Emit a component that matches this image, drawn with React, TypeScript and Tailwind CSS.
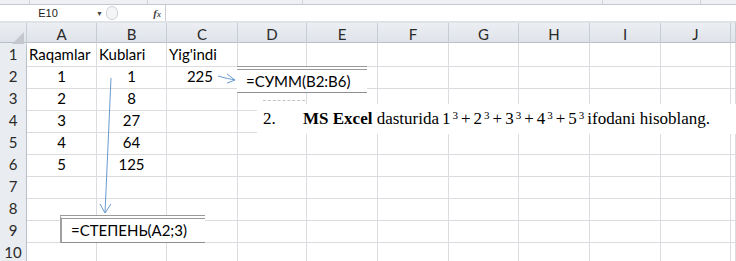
import React from 'react';

const COLS = ['A', 'B', 'C', 'D', 'E', 'F', 'G', 'H', 'I', 'J', ''];
const GRID = 'grid grid-cols-[27px_70px_70px_71px_69px_71px_71px_70px_71px_71px_70px_1fr]';

type Cell = { text?: string; align?: 'left' | 'center' | 'right' };

const rows: Cell[][] = [
  [{ text: 'Raqamlar' }, { text: 'Kublari' }, { text: "Yig'indi" }],
  [{ text: '1', align: 'center' }, { text: '1', align: 'center' }, { text: '225', align: 'right' }],
  [{ text: '2', align: 'center' }, { text: '8', align: 'center' }],
  [{ text: '3', align: 'center' }, { text: '27', align: 'center' }],
  [{ text: '4', align: 'center' }, { text: '64', align: 'center' }],
  [{ text: '5', align: 'center' }, { text: '125', align: 'center' }],
  [],
  [],
  [],
  [],
];

const alignClass = (a?: string) =>
  a === 'center' ? 'justify-center' : a === 'right' ? 'justify-end pr-[24px]' : 'justify-start pl-[2px]';

const Cube: React.FC<{ n: string }> = ({ n }) => (
  <span>
    {n}
    <sup className="text-[11px] ml-[2px]">3</sup>
  </span>
);

export default function App() {
  return (
    <div className="w-[736px] h-[261px] overflow-hidden bg-white font-['Lato',sans-serif] text-[15px] text-black">
      {/* ribbon edge */}
      <div className="h-[5px] bg-[#eef0f3] border-b border-[#c3c8cf] flex">
        <div className="w-[30px] border-r border-[#d0d4da]" />
        <div className="w-[118px] border-r border-[#d0d4da]" />
        <div className="w-[155px] border-r border-[#d0d4da]" />
        <div className="w-[300px] border-r border-[#d0d4da]" />
        <div className="w-[98px] border-r border-[#d0d4da]" />
      </div>

      {/* formula bar */}
      <div className="h-[16px] flex items-center bg-white">
        <div className="w-[96px] text-center text-[11px] font-['Liberation_Sans',sans-serif] text-[#222]">E10</div>
        <div className="w-[10px] text-[7px] text-[#444] leading-none">▼</div>
        <div className="w-[12px] h-[14px] rounded-full border border-[#cfd3d8] bg-[#f4f5f7]" />
        <div className="w-[47px] text-right pr-[4px] text-[11px] italic font-['Liberation_Serif',serif] font-bold text-[#444]">
          f<span className="text-[8px]">x</span>
        </div>
        <div className="flex-1 h-full border-l border-[#c9ced5]" />
      </div>
      <div className="h-[2px] bg-[#dfe3e8]" />

      <div className="relative">
        {/* column headers */}
        <div className={`${GRID} h-[20px] bg-gradient-to-b from-[#eceef2] to-[#dfe3e9] border-b border-[#b9c0c9]`}>
          <div className="relative border-r border-[#c6ccd4]">
            <div className="absolute right-[2px] bottom-[2px] w-0 h-0 border-l-[12px] border-l-transparent border-b-[12px] border-b-[#c4c8ce]" />
          </div>
          {COLS.map((c, i) => (
            <div key={i} className="flex items-center justify-center border-r border-[#c6ccd4] text-[#2a2a2a]">
              {c}
            </div>
          ))}
        </div>

        {/* rows */}
        {rows.map((r, ri) => (
          <div key={ri} className={`${GRID} h-[22px]`}>
            <div className="flex items-center justify-center bg-[#e9ecf0] border-r border-[#b9c0c9] border-b border-b-[#d3d8de] text-[#2a2a2a]">
              {ri + 1}
            </div>
            {COLS.map((_, ci) => {
              const cell = r[ci];
              return (
                <div
                  key={ci}
                  className={`flex items-center border-r border-b border-[#dadcdf] ${alignClass(cell?.align)}`}
                >
                  {cell?.text}
                </div>
              );
            })}
          </div>
        ))}

        {/* =СУММ callout */}
        <div className="absolute left-[237px] top-[43px] w-[130px] h-[27px] bg-white border-t-[4px] border-double border-t-[#9a9a9a] border-b border-b-[#8f8f8f] flex items-center pl-[9px] text-[15px]">
          =СУММ(B2:B6)
        </div>
        <div className="absolute left-[263px] top-[77px] w-[42px] border-t border-dashed border-[#c4c4c4]" />

        {/* task text */}
        <div className="absolute left-[257px] top-[81px] w-[479px] h-[30px] bg-white flex items-center font-['Liberation_Serif',serif] text-[17px] whitespace-nowrap">
          <span className="pl-[6px] w-[46px]">2.</span>
          <span className="font-bold">MS Excel</span>
          <span className="flex items-center gap-[3px]">
            <span>&nbsp;dasturida</span>
            <Cube n="1" />+<Cube n="2" />+<Cube n="3" />+<Cube n="4" />+<Cube n="5" />
            <span>ifodani hisoblang.</span>
          </span>
        </div>

        {/* =СТЕПЕНЬ callout */}
        <div className="absolute left-[60px] top-[192px] w-[145px] h-[28px] bg-white border-t-[4px] border-double border-t-[#9a9a9a] border-l-2 border-l-[#a0a0a0] border-b border-b-[#8f8f8f] flex items-center pl-[9px] text-[15px]">
          =СТЕПЕНЬ(A2;3)
        </div>

        {/* arrows */}
        <svg className="absolute left-0 top-0 pointer-events-none" width="736" height="218" viewBox="0 0 736 218">
          <g fill="none" stroke="#6a9bd1" strokeWidth="1">
            <path d="M218 53 C225 55 230 56 235 57" />
            <path d="M227 51 L235 57 L227 60" />
            <path d="M111 55 L105 190" />
            <path d="M100 181 L105 190 L111 181" />
          </g>
        </svg>
      </div>
    </div>
  );
}
